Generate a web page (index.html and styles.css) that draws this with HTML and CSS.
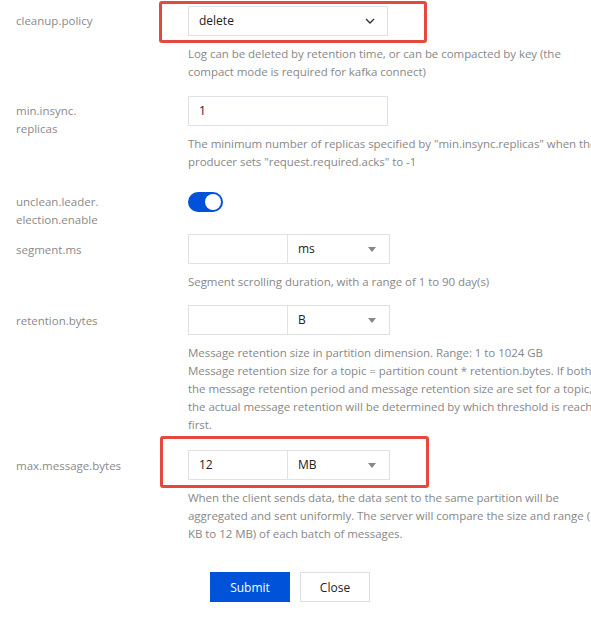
FILE: index.html
```html
<!DOCTYPE html>
<html lang="en">
<head>
<meta charset="utf-8">
<title>Topic config</title>
<link rel="stylesheet" href="styles.css">
</head>
<body>
<div class="form">
  <div class="field f1">
    <div class="label">cleanup.policy</div>
    <div class="control">
      <div class="select">
        <span>delete</span>
        <svg class="chevron" width="10" height="6" viewBox="0 0 10 6"><path d="M1 1 L5 5 L9 1" fill="none" stroke="#333" stroke-width="1.4"/></svg>
      </div>
      <div class="help">Log can be deleted by retention time, or can be compacted by key (the<br>compact mode is required for kafka connect)</div>
    </div>
  </div>

  <div class="field f2">
    <div class="label">min.insync.<br>replicas</div>
    <div class="control">
      <div class="input wide">1</div>
      <div class="help">The minimum number of replicas specified by "min.insync.replicas" when the<br>producer sets "request.required.acks" to -1</div>
    </div>
  </div>

  <div class="field f3">
    <div class="label">unclean.leader.<br>election.enable</div>
    <div class="control">
      <div class="toggle"><span class="knob"></span></div>
    </div>
  </div>

  <div class="field f4">
    <div class="label">segment.ms</div>
    <div class="control">
      <div class="group">
        <div class="input short"></div>
        <div class="unit"><span>ms</span><span class="tri"></span></div>
      </div>
      <div class="help">Segment scrolling duration, with a range of 1 to 90 day(s)</div>
    </div>
  </div>

  <div class="field f5">
    <div class="label">retention.bytes</div>
    <div class="control">
      <div class="group">
        <div class="input short"></div>
        <div class="unit"><span>B</span><span class="tri"></span></div>
      </div>
      <div class="help">Message retention size in partition dimension. Range: 1 to 1024 GB<br>Message retention size for a topic = partition count * retention.bytes. If both<br>the message retention period and message retention size are set for a topic,<br>the actual message retention will be determined by which threshold is reached<br>first.</div>
    </div>
  </div>

  <div class="field f6">
    <div class="label">max.message.bytes</div>
    <div class="control">
      <div class="group">
        <div class="input short">12</div>
        <div class="unit"><span>MB</span><span class="tri"></span></div>
      </div>
      <div class="help">When the client sends data, the data sent to the same partition will be<br>aggregated and sent uniformly. The server will compare the size and range (1<br>KB to 12 MB) of each batch of messages.</div>
    </div>
  </div>

  <div class="actions">
    <button class="btn primary">Submit</button>
    <button class="btn">Close</button>
  </div>

  <div class="highlight hl-top"></div>
  <div class="highlight hl-bottom"></div>
</div>
</body>
</html>
```

FILE: styles.css
```css
html, body {
  margin: 0;
  padding: 0;
  overflow: hidden;
  background: #fff;
}
body {
  font-family: "Open Sans", "Noto Sans", "Liberation Sans", sans-serif;
  font-size: 11.5px;
  line-height: 18px;
  color: #333;
}
.form {
  position: relative;
  padding: 6px 0 0 16px;
  width: 700px;
}
.field {
  display: grid;
  grid-template-columns: 172px 520px;
}
.label {
  color: #8a8a8a;
  padding-top: 7px;
  line-height: 18px;
}
.control {
  display: flex;
  flex-direction: column;
  align-items: flex-start;
}
.f2 { margin-top: 15px; }
.f3 { margin-top: 15px; }
.f4 { margin-top: 5px; }
.f5 { margin-top: 14px; }
.f6 { margin-top: 16px; }
.f1 .label, .f2 .label { padding-top: 6px; }

.select, .input, .unit {
  box-sizing: border-box;
  height: 30px;
  border: 1px solid #dfe1e6;
  background: #fff;
  color: #222;
  display: flex;
  align-items: center;
  padding: 0 10px;
  font-size: 12px;
}
.select {
  width: 200px;
  justify-content: space-between;
  padding-right: 12px;
}
.input.wide { width: 200px; }
.group { display: flex; }
.input.short { width: 100px; }
.unit {
  width: 102px;
  border-left: none;
  justify-content: space-between;
  padding-right: 13px;
}
.tri {
  width: 0;
  height: 0;
  border-left: 4px solid transparent;
  border-right: 4px solid transparent;
  border-top: 5px solid #888;
  margin-top: 1px;
}
.help {
  color: #888;
  margin-top: 9px;
  white-space: nowrap;
  letter-spacing: -0.05px;
}
.toggle {
  margin-top: 6px;
  width: 35px;
  height: 20px;
  border-radius: 10px;
  background: #0052d9;
  position: relative;
}
.knob {
  position: absolute;
  right: 2px;
  top: 2px;
  width: 16px;
  height: 16px;
  border-radius: 50%;
  background: #fff;
}
.actions {
  margin-top: 29px;
  padding-left: 194px;
  display: flex;
  gap: 10px;
}
.btn {
  box-sizing: border-box;
  height: 30px;
  width: 70px;
  border: 1px solid #dcdfe6;
  background: #fff;
  color: #222;
  font-family: inherit;
  font-size: 12px;
  padding: 0;
  margin: 0;
}
.btn.primary {
  width: 80px;
  background: #0052d9;
  border-color: #0052d9;
  color: #fff;
}
.highlight {
  position: absolute;
  box-sizing: border-box;
  border: 3px solid #e5483f;
  border-radius: 3px;
}
.hl-top {
  left: 159px;
  top: 1px;
  width: 268px;
  height: 42px;
}
.hl-bottom {
  left: 160px;
  top: 436px;
  width: 269px;
  height: 52px;
}
```
